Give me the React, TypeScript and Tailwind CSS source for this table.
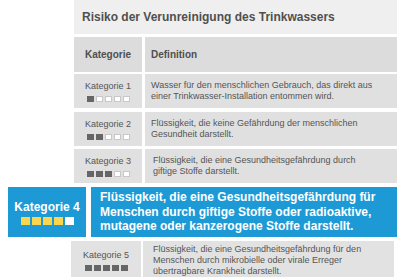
const rows = [
  { cat: "Kategorie 1", level: 1, text: "Wasser für den menschlichen Gebrauch, das direkt aus einer Trinkwasser-Installation entommen wird.", mt: "mt-[2px]", pl: "pl-[6px]" },
  { cat: "Kategorie 2", level: 2, text: "Flüssigkeit, die keine Gefährdung der menschlichen Gesundheit darstellt.", mt: "mt-[4px]", pl: "pl-[6px]" },
  { cat: "Kategorie 3", level: 3, text: "Flüssigkeit, die eine Gesundheitsgefährdung durch giftige Stoffe darstellt.", mt: "mt-[3px]", pl: "pl-[8px]" },
];

function Squares({ level, big }: { level: number; big?: boolean }) {
  return (
    <div className="flex gap-[2px]">
      {[0, 1, 2, 3, 4].map((i) => {
        const on = i < level;
        if (big) {
          return (
            <span
              key={i}
              className={on ? "w-[9px] h-[8px] bg-[#f8d64e]" : "w-[9px] h-[8px] bg-white"}
            />
          );
        }
        return (
          <span
            key={i}
            className={
              on
                ? "w-[7px] h-[6px] bg-[#666666]"
                : "w-[7px] h-[6px] bg-white border border-[#c8c8c8]"
            }
          />
        );
      })}
    </div>
  );
}

export default function App() {
  return (
    <div className="w-[416px] h-[277px] overflow-hidden bg-white text-[#555555] font-['Liberation_Sans',Arial,sans-serif]">
      <div className="ml-[74px] mr-[19px] h-[34px] bg-[#efefef] flex items-center pl-[8px] text-[12px] font-bold text-[#4f4f4f]">
        Risiko der Verunreinigung des Trinkwassers
      </div>

      <div className="ml-[74px] mr-[19px] mt-[3px] h-[35px] flex gap-[3px] text-[10px] font-bold text-[#4f4f4f]">
        <div className="w-[68px] bg-[#dcdcdc] flex items-center justify-center">Kategorie</div>
        <div className="flex-1 bg-[#dcdcdc] flex items-center pl-[6px]">Definition</div>
      </div>

      {rows.map((r) => (
        <div key={r.cat} className={`ml-[74px] mr-[19px] ${r.mt} h-[34px] flex gap-[3px] text-[9px] leading-[11px]`}>
          <div className="w-[68px] bg-[#e0e0e0] flex flex-col items-center justify-center gap-[4px]">
            <span>{r.cat}</span>
            <Squares level={r.level} />
          </div>
          <div className={`flex-1 bg-[#e0e0e0] flex items-center ${r.pl} pr-[16px]`}>
            <p>{r.text}</p>
          </div>
        </div>
      ))}

      <div className="ml-[8px] mr-[19px] mt-[4px] h-[50px] flex gap-[5px] text-white font-bold">
        <div className="w-[78px] bg-[#1d9ad6] flex flex-col items-center justify-center gap-[3px]">
          <span className="text-[12px] leading-[14px]">Kategorie 4</span>
          <Squares level={4} big />
        </div>
        <div className="flex-1 bg-[#1d9ad6] flex items-center pl-[9px] pr-2 text-[12px] leading-[14.5px]">
          <p>
            Flüssigkeit, die eine Gesundheitsgefährdung für Menschen durch giftige Stoffe oder radioaktive, mutagene oder kanzerogene Stoffe darstellt.
          </p>
        </div>
      </div>

      <div className="ml-[71px] mr-[22px] mt-[4px] h-[39px] flex gap-[2px] text-[9px] leading-[11px]">
        <div className="w-[70px] bg-[#e2e2e2] flex flex-col items-center justify-center gap-[4px]">
          <span>Kategorie 5</span>
          <Squares level={5} />
        </div>
        <div className="flex-1 bg-[#e2e2e2] flex items-center pl-[10px] pr-[16px]">
          <p>
            Flüssigkeit, die eine Gesundheitsgefährdung für den Menschen durch mikrobielle oder virale Erreger übertragbare Krankheit darstellt.
          </p>
        </div>
      </div>
    </div>
  );
}
